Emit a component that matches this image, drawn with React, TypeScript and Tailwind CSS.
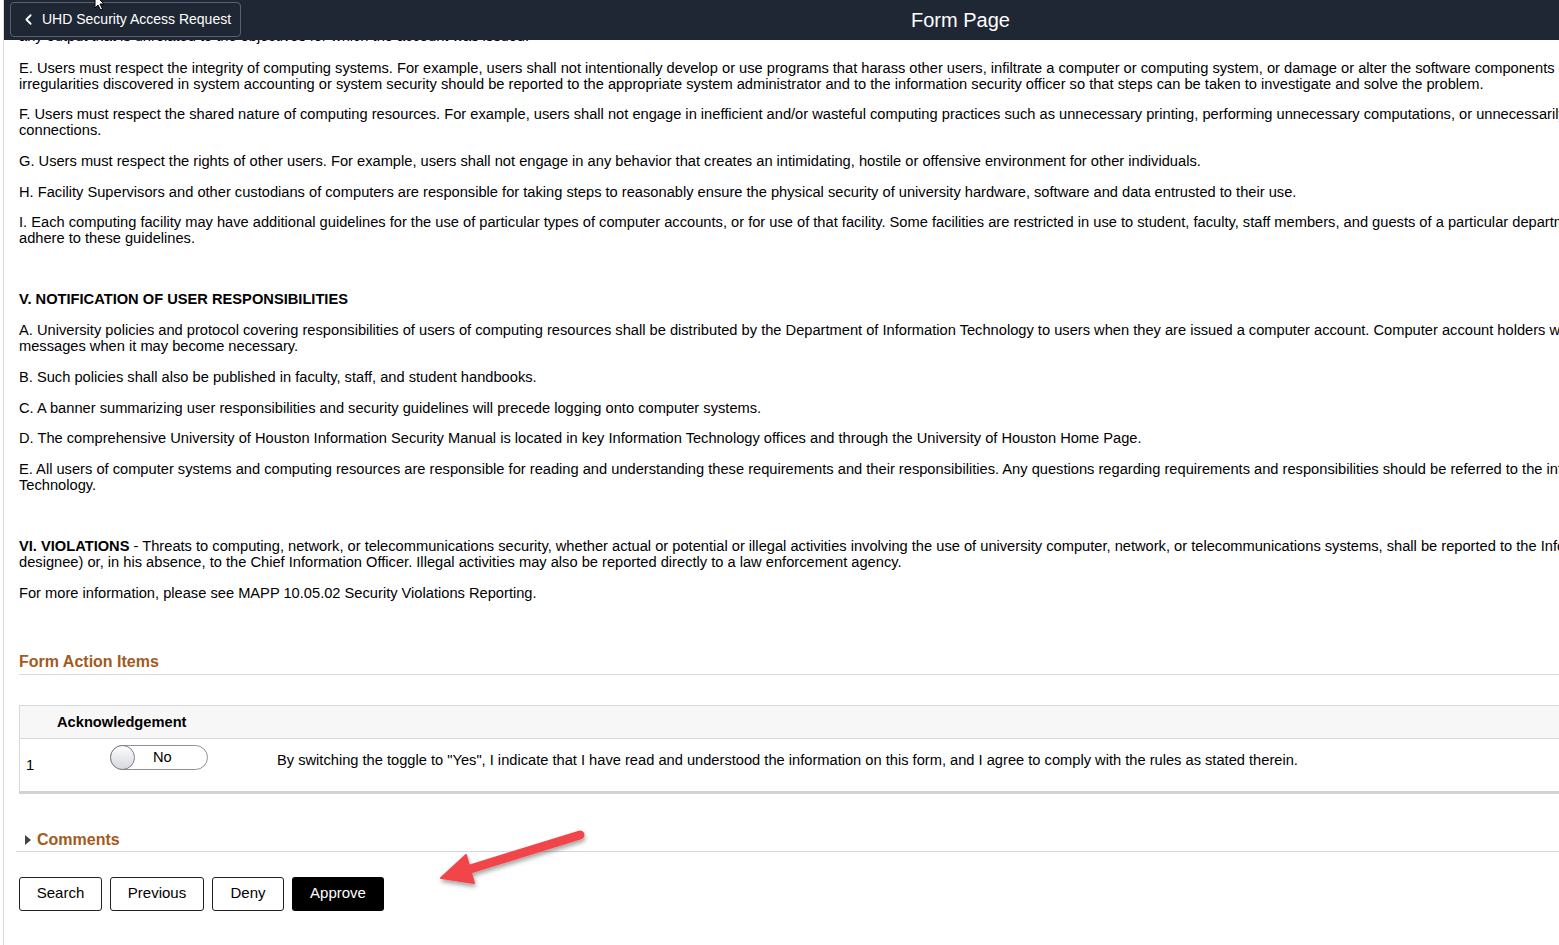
import { ChevronLeft } from "lucide-react";

const font = { fontFamily: '"Liberation Sans", Arial, sans-serif' };

// each entry is a paragraph, each string a rendered line (page is wider than the window)
const rulesTop: string[][] = [
  [
    "E. Users must respect the integrity of computing systems. For example, users shall not intentionally develop or use programs that harass other users, infiltrate a computer or computing system, or damage or alter the software components of a computer or computing system.",
    "irregularities discovered in system accounting or system security should be reported to the appropriate system administrator and to the information security officer so that steps can be taken to investigate and solve the problem.",
  ],
  [
    "F. Users must respect the shared nature of computing resources. For example, users shall not engage in inefficient and/or wasteful computing practices such as unnecessary printing, performing unnecessary computations, or unnecessarily holding network",
    "connections.",
  ],
  [
    "G. Users must respect the rights of other users. For example, users shall not engage in any behavior that creates an intimidating, hostile or offensive environment for other individuals.",
  ],
  [
    "H. Facility Supervisors and other custodians of computers are responsible for taking steps to reasonably ensure the physical security of university hardware, software and data entrusted to their use.",
  ],
  [
    "I. Each computing facility may have additional guidelines for the use of particular types of computer accounts, or for use of that facility. Some facilities are restricted in use to student, faculty, staff members, and guests of a particular department. Users must",
    "adhere to these guidelines.",
  ],
];

const notification: string[][] = [
  [
    "A. University policies and protocol covering responsibilities of users of computing resources shall be distributed by the Department of Information Technology to users when they are issued a computer account. Computer account holders will receive",
    "messages when it may become necessary.",
  ],
  ["B. Such policies shall also be published in faculty, staff, and student handbooks."],
  ["C. A banner summarizing user responsibilities and security guidelines will precede logging onto computer systems."],
  ["D. The comprehensive University of Houston Information Security Manual is located in key Information Technology offices and through the University of Houston Home Page."],
  [
    "E. All users of computer systems and computing resources are responsible for reading and understanding these requirements and their responsibilities. Any questions regarding requirements and responsibilities should be referred to the information",
    "Technology.",
  ],
];

function Para({ lines }: { lines: string[] }) {
  return (
    <div className="mb-[14.7px]">
      {lines.map((l, i) => (
        <div key={i} className="whitespace-nowrap h-4 leading-4">
          {l}
        </div>
      ))}
    </div>
  );
}

function Toggle() {
  return (
    <div className="relative w-[98px] h-[25px] rounded-full border border-[#8e9196] bg-white flex items-center">
      <div className="absolute left-[-1px] top-[-1px] w-[25px] h-[25px] rounded-full border border-[#7d8086] bg-gradient-to-b from-[#fdfdfd] to-[#d5d8dd]" />
      <span className="ml-[42px] text-[14.67px] text-black">No</span>
    </div>
  );
}

export default function App() {
  const buttons = [
    { label: "Search", w: "w-[83px]" },
    { label: "Previous", w: "w-[94px]" },
    { label: "Deny", w: "w-[72px]" },
  ];

  return (
    <div className="relative w-[1559px] h-[945px] overflow-hidden bg-white pl-[3px]" style={font}>
      <div className="relative h-full border-l border-[#dedede] text-[14.67px] text-black">
        {/* Header */}
        <div className="absolute top-0 left-0 w-full h-[40px] bg-[#1f2734] z-10 flex items-center">
          <button className="ml-[6px] h-[35px] mt-[-2px] px-[9px] flex items-center gap-[5px] rounded-[4px] border border-[#596170] text-white text-[14px]">
            <ChevronLeft className="w-[17px] h-[17px]" strokeWidth={2.5} />
            <span>UHD Security Access Request</span>
          </button>
          <div className="absolute left-[907px] top-[8px] text-white text-[20px] leading-6">Form Page</div>
          <svg className="absolute left-[89px] top-[-5px]" width="14" height="16" viewBox="0 0 14 16">
            <path d="M2 0 L2 13 L5 10 L7.5 15 L9.5 14 L7 9 L11 9 Z" fill="white" stroke="black" strokeWidth="1" />
          </svg>
        </div>

        {/* Body */}
        <div className="pl-[15px] pt-[28px]">
          <Para lines={["any output that is unrelated to the objectives for which the account was issued."]} />
          <div className="pt-[1px]">
            {rulesTop.map((p, i) => (
              <Para key={i} lines={p} />
            ))}
          </div>

          <div className="mt-[45px] mb-[14.7px] font-bold h-4 leading-4 whitespace-nowrap">
            V. NOTIFICATION OF USER RESPONSIBILITIES
          </div>
          {notification.map((p, i) => (
            <Para key={i} lines={p} />
          ))}

          <div className="mt-[45px] mb-[14.7px]">
            <div className="whitespace-nowrap h-4 leading-4">
              <span className="font-bold">VI. VIOLATIONS</span> - Threats to computing, network, or telecommunications security, whether actual or potential or illegal activities involving the use of university computer, network, or telecommunications systems, shall be reported to the Information Security Officer (or
            </div>
            <div className="whitespace-nowrap h-4 leading-4">
              designee) or, in his absence, to the Chief Information Officer. Illegal activities may also be reported directly to a law enforcement agency.
            </div>
          </div>
          <Para lines={["For more information, please see MAPP 10.05.02 Security Violations Reporting."]} />

          {/* Form Action Items */}
          <div className="mt-[51px] w-[1600px] border-b border-[#d3d7de] pb-[2px]">
            <div className="text-[16px] font-bold text-[#a35a1c] leading-5">Form Action Items</div>
          </div>

          <div className="mt-[30px] w-[1600px] border border-[#d3d7de] border-b-[3px] border-b-[#d0d2d6]">
            <div className="h-[33px] bg-[#f7f7f7] border-b border-[#d3d7de] flex items-center pl-[37px] font-bold text-[14.67px]">
              Acknowledgement
            </div>
            <div className="h-[52px] flex">
              <div className="w-[90px] pl-[6px] pt-[15px]">1</div>
              <div className="w-[167px] pt-[6px]">
                <Toggle />
              </div>
              <div className="pt-[10px] whitespace-nowrap">
                By switching the toggle to "Yes", I indicate that I have read and understood the information on this form, and I agree to comply with the rules as stated therein.
              </div>
            </div>
          </div>

          {/* Comments */}
          <div className="mt-[36px] ml-[-3px] w-[1600px] border-b border-[#d3d7de] pb-[1px] flex items-center">
            <svg width="10" height="12" viewBox="0 0 10 12" className="ml-[7px] mr-[4px]">
              <path d="M2 1 L8 6 L2 11 Z" fill="#444" />
            </svg>
            <span className="text-[16px] font-bold text-[#a35a1c] leading-5">Comments</span>
          </div>

          <div className="mt-[25px] flex gap-[8px]">
            {buttons.map((b) => (
              <button
                key={b.label}
                className={`${b.w} h-[34px] rounded-[3px] border border-[#222] bg-white text-[15px] text-black`}
              >
                {b.label}
              </button>
            ))}
            <button className="w-[92px] h-[34px] rounded-[3px] bg-black text-white text-[15px]">Approve</button>
          </div>
        </div>

        {/* annotation arrow */}
        <svg className="absolute left-[427px] top-[822px]" width="170" height="80" viewBox="0 0 170 80">
          <defs>
            <filter id="sh" x="-20%" y="-20%" width="140%" height="160%">
              <feDropShadow dx="1" dy="3" stdDeviation="2" floodColor="#000" floodOpacity="0.35" />
            </filter>
          </defs>
          <g filter="url(#sh)" fill="#f2454a" stroke="#f2454a" strokeLinejoin="round">
            <line x1="149" y1="13" x2="36" y2="48" strokeWidth="9" strokeLinecap="round" />
            <path d="M10 56 L35 33 L43 61 Z" strokeWidth="2" />
          </g>
        </svg>
      </div>
    </div>
  );
}
